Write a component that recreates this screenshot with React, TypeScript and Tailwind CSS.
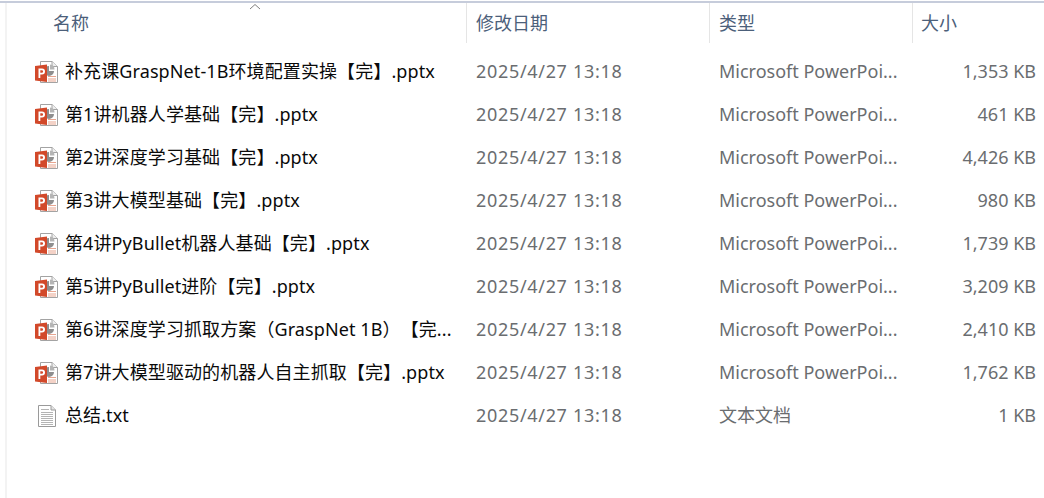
const PPT = "Microsoft PowerPoi...";

const FILES = [
  { name: "补充课GraspNet-1B环境配置实操【完】.pptx", type: PPT, size: "1,353 KB" },
  { name: "第1讲机器人学基础【完】.pptx", type: PPT, size: "461 KB" },
  { name: "第2讲深度学习基础【完】.pptx", type: PPT, size: "4,426 KB" },
  { name: "第3讲大模型基础【完】.pptx", type: PPT, size: "980 KB" },
  { name: "第4讲PyBullet机器人基础【完】.pptx", type: PPT, size: "1,739 KB" },
  { name: "第5讲PyBullet进阶【完】.pptx", type: PPT, size: "3,209 KB" },
  { name: "第6讲深度学习抓取方案（GraspNet 1B）【完...", type: PPT, size: "2,410 KB" },
  { name: "第7讲大模型驱动的机器人自主抓取【完】.pptx", type: PPT, size: "1,762 KB" },
  { name: "总结.txt", type: "文本文档", size: "1 KB" },
];

function PptIcon() {
  return (
    <svg width="25" height="24" viewBox="0 0 25 24" className="shrink-0">
      <path d="M7.5 1.5H19L24.5 6.5V22.5H7.5Z" fill="#fff" stroke="#a3a3a3" />
      <path d="M19 1.5V6.5H24.5" fill="#eee" stroke="#a3a3a3" />
      <path d="M16 6a5 5 0 1 0 5 5h-5Z" fill="#8e8e8e" />
      <path d="M17 4.5a5 5 0 0 1 4.5 5H17Z" fill="#b5b5b5" />
      <path d="M15 16.5h8M15 19h8M15 21h8" stroke="#e8a58f" strokeWidth="1" />
      <path d="M2 6L14 4.5V22L2 20.5Z" fill="#d2492a" />
      <path
        d="M5.5 8.5H9a3 3 0 0 1 0 6H7.3V18H5.5ZM7.3 10.2V12.8H8.8a1.3 1.3 0 0 0 0-2.6Z"
        fill="#fff"
        fillRule="evenodd"
      />
    </svg>
  );
}

function TxtIcon() {
  return (
    <svg width="25" height="24" viewBox="0 0 25 24" className="shrink-0">
      <path d="M5.5 1.5H18L22.5 6V22.5H5.5Z" fill="#fff" stroke="#9a9a9a" />
      <path d="M18 1.5V6H22.5" fill="#e4e4e4" stroke="#9a9a9a" />
      <path
        d="M8 5.5H16M8 8.5H20M8 10.5H20M8 12.5H20M8 14.5H20M8 16.5H20M8 18.5H20M8 20.5H20"
        stroke="#b4b4b4"
        strokeWidth="1"
      />
    </svg>
  );
}

export default function App() {
  return (
    <div className="w-[1044px] h-[498px] overflow-hidden bg-white font-['Noto_Sans','Noto_Sans_CJK_SC',sans-serif] text-[18px]">
      <div className="h-[2px] mt-px bg-[#c6ccdb]" />
      <div className="h-[495px] ml-[5px] border-l-2 border-[#f3f3f3]">
        {/* 表头 */}
        <div className="relative flex h-[40px] items-center text-[#4c607a]">
          <div className="w-[459px] h-full pl-[46px] flex items-center">名称</div>
          <div className="w-[243px] h-full pl-[9px] flex items-center border-l border-[#e5e5e5]">修改日期</div>
          <div className="w-[203px] h-full pl-[9px] flex items-center border-l border-[#e5e5e5]">类型</div>
          <div className="flex-1 h-full pl-[8px] flex items-center border-l border-[#e5e5e5]">大小</div>
          <svg width="12" height="7" viewBox="0 0 12 7" className="absolute left-[242px] top-0">
            <path d="M1 6L6 1.5L11 6" fill="none" stroke="#808080" />
          </svg>
        </div>

        {/* 文件列表 */}
        <div className="pt-[7px]">
          {FILES.map((file) => (
            <div key={file.name} className="flex h-[43px] items-center">
              <div className="w-[459px] flex items-center pl-[26px] text-[#0a0a0a]">
                {file.name.endsWith(".txt") ? <TxtIcon /> : <PptIcon />}
                <span className="ml-[7px] whitespace-nowrap tracking-[0.1px] [text-spacing-trim:space-all]">{file.name}</span>
              </div>
              <div className="w-[243px] pl-[10px] text-[#6a6d70] whitespace-nowrap tracking-[0.68px]">2025/4/27 13:18</div>
              <div className="w-[203px] pl-[10px] text-[#6a6d70] whitespace-nowrap">{file.type}</div>
              <div className="flex-1 pr-[8px] text-right text-[#6a6d70] whitespace-nowrap">{file.size}</div>
            </div>
          ))}
        </div>
      </div>
    </div>
  );
}
